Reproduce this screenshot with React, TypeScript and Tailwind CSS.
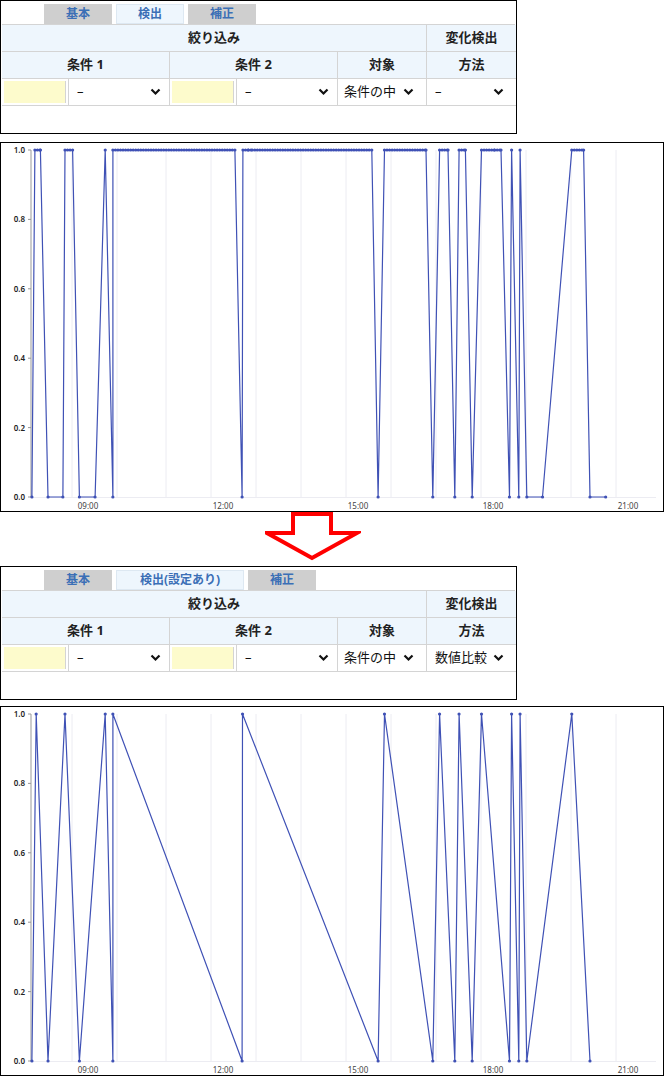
import React from "react";

const FONT = { fontFamily: '"Noto Sans", "Noto Sans CJK JP", sans-serif' };

type Pt = [number, number];

// x values in chart units (zoom scale), converted by /2.36
function densify(seq: Pt[], holdStep = 0): Pt[] {
  if (!holdStep) return seq;
  const out: Pt[] = [];
  for (let i = 0; i < seq.length; i++) {
    out.push(seq[i]);
    const n = seq[i + 1];
    if (n && n[1] === seq[i][1] && seq[i][1] === 1) {
      for (let x = seq[i][0] + holdStep; x < n[0]; x += holdStep) out.push([x, 1]);
    }
  }
  return out;
}

const before: Pt[] = densify(
  [
    [73, 0], [80, 1], [93, 1], [111, 0], [146, 0], [151, 1], [169, 1], [185, 0], [222, 0],
    [246, 1], [264, 0], [264, 1], [552, 1], [569, 0], [571, 1], [584, 1], [593, 1], [875, 1],
    [890, 0], [905, 1], [1003, 1], [1019, 0], [1035, 1], [1055, 1], [1071, 0], [1081, 1],
    [1096, 1], [1112, 0], [1134, 1], [1152, 1], [1165, 1], [1180, 1], [1200, 0], [1205, 1],
    [1222, 0], [1225, 1], [1241, 0], [1278, 0], [1347, 1], [1375, 1], [1390, 0], [1427, 0],
  ],
  6
);

const after: Pt[] = [
  [73, 0], [83, 1], [111, 0], [151, 1], [185, 0], [246, 1], [264, 0], [264, 1], [569, 0],
  [570, 1], [890, 0], [905, 1], [1019, 0], [1035, 1], [1071, 0], [1081, 1], [1112, 0],
  [1134, 1], [1200, 0], [1205, 1], [1222, 0], [1225, 1], [1241, 0], [1347, 1], [1390, 0],
];

function Chart({ data }: { data: Pt[] }) {
  const top = 7;
  const bottom = 354;
  const X = (v: number) => v / 2.36;
  const Y = (v: number) => bottom - v * (bottom - top);
  const grids = [71, 116, 165, 210, 255, 300, 345, 390, 435, 480, 525, 570, 615];
  const labels: [string, number][] = [["09:00", 87], ["12:00", 222], ["15:00", 357], ["18:00", 492], ["21:00", 627]];
  const ticks = [0, 0.2, 0.4, 0.6, 0.8, 1];
  const pts = data.map(([x, y]) => `${X(x).toFixed(1)},${Y(y).toFixed(1)}`).join(" ");
  return (
    <div className="border border-black bg-white h-[370px]">
      <svg width="662" height="368" className="block" style={FONT}>
        {grids.map((g) => (
          <line key={g} x1={g} x2={g} y1={top} y2={bottom} stroke="#ececf2" strokeWidth="1" />
        ))}
        <line x1={30} x2={30} y1={top} y2={bottom} stroke="#999" strokeWidth="1" />
        <line x1={30} x2={655} y1={bottom + 0.5} y2={bottom + 0.5} stroke="#ececf2" strokeWidth="1" />
        {ticks.map((t) => (
          <g key={t}>
            <line x1={27} x2={30} y1={Y(t)} y2={Y(t)} stroke="#999" />
            <text x={24} y={Y(t) + 3} fontSize="8" fontWeight="600" textAnchor="end" fill="#222">
              {t.toFixed(1)}
            </text>
          </g>
        ))}
        {labels.map(([l, x]) => (
          <text key={l} x={x} y={bottom + 12} fontSize="8" textAnchor="middle" fill="#444">
            {l}
          </text>
        ))}
        <polyline points={pts} fill="none" stroke="#3f51b5" strokeWidth="1.2" />
        {data.map(([x, y], i) => (
          <circle key={i} cx={X(x)} cy={Y(y)} r="1.6" fill="#3f51b5" />
        ))}
      </svg>
    </div>
  );
}

function Chevron() {
  return (
    <svg width="11" height="8" viewBox="0 0 11 8">
      <path d="M1.5 1.5 L5.5 5.5 L9.5 1.5" fill="none" stroke="#111" strokeWidth="2.2" />
    </svg>
  );
}

function Select({ text, w }: { text: string; w: string }) {
  return (
    <div className={`flex items-center justify-between px-1.5 h-full ${w}`}>
      <span className="text-[13px] text-[#111]">{text}</span>
      <Chevron />
    </div>
  );
}

function Panel({ detect, method }: { detect: string; method: string }) {
  const tab = "h-[20px] flex items-center justify-center text-[12px] font-bold text-[#3b6fb6]";
  const th = "bg-[#eef6fd] border-[#d4d4d4] flex items-center justify-center text-[13px] font-bold text-[#222]";
  return (
    <div className="w-[517px] border border-black bg-white h-[134px]" style={FONT}>
      <div className="flex gap-1 pl-[43px] pt-[3px]">
        <div className={`${tab} w-[68px] bg-[#cfcfcf]`}>基本</div>
        <div className={`${tab} ${detect.length > 2 ? "w-[128px]" : "w-[68px]"} bg-[#eef6fd] border border-[#dde8f2]`}>{detect}</div>
        <div className={`${tab} w-[68px] bg-[#cfcfcf]`}>補正</div>
      </div>
      <div className="mx-[1px] grid grid-cols-[168px_168px_89px_89px] border-t border-[#d4d4d4]">
        <div className={`${th} col-span-3 h-[27px] border-r border-b`}>絞り込み</div>
        <div className={`${th} h-[27px] border-b`}>変化検出</div>
        <div className={`${th} h-[27px] border-r border-b`}>条件 1</div>
        <div className={`${th} h-[27px] border-r border-b`}>条件 2</div>
        <div className={`${th} h-[27px] border-r border-b`}>対象</div>
        <div className={`${th} h-[27px] border-b`}>方法</div>
        {[0, 1].map((i) => (
          <div key={i} className="flex h-[27px] border-r border-b border-[#d4d4d4]">
            <div className="w-[62px] m-[2px] bg-[#fdfbcc] border-r border-[#d4d4d4]" />
            <div className="border-l border-[#d4d4d4] flex-1">
              <Select text="–" w="w-full pl-2 pr-2" />
            </div>
          </div>
        ))}
        <div className="h-[27px] border-r border-b border-[#d4d4d4]">
          <Select text="条件の中" w="w-full pr-3" />
        </div>
        <div className="h-[27px] border-b border-[#d4d4d4]">
          <Select text={method} w="w-full pl-2 pr-3" />
        </div>
      </div>
    </div>
  );
}

function Arrow() {
  return (
    <div className="h-[54px] flex justify-center pr-[38px] items-start">
      <svg width="96" height="50" viewBox="0 0 96 50">
        <path d="M28 2 H66 V21 H92 L47 46 L2 21 H28 Z" fill="white" stroke="#ff0000" strokeWidth="4" strokeLinejoin="miter" />
      </svg>
    </div>
  );
}

export default function App() {
  return (
    <div className="w-[664px] bg-white">
      <Panel detect="検出" method="–" />
      <div className="h-[8px]" />
      <Chart data={before} />
      <Arrow />
      <Panel detect="検出(設定あり)" method="数値比較" />
      <div className="h-[6px]" />
      <Chart data={after} />
    </div>
  );
}
